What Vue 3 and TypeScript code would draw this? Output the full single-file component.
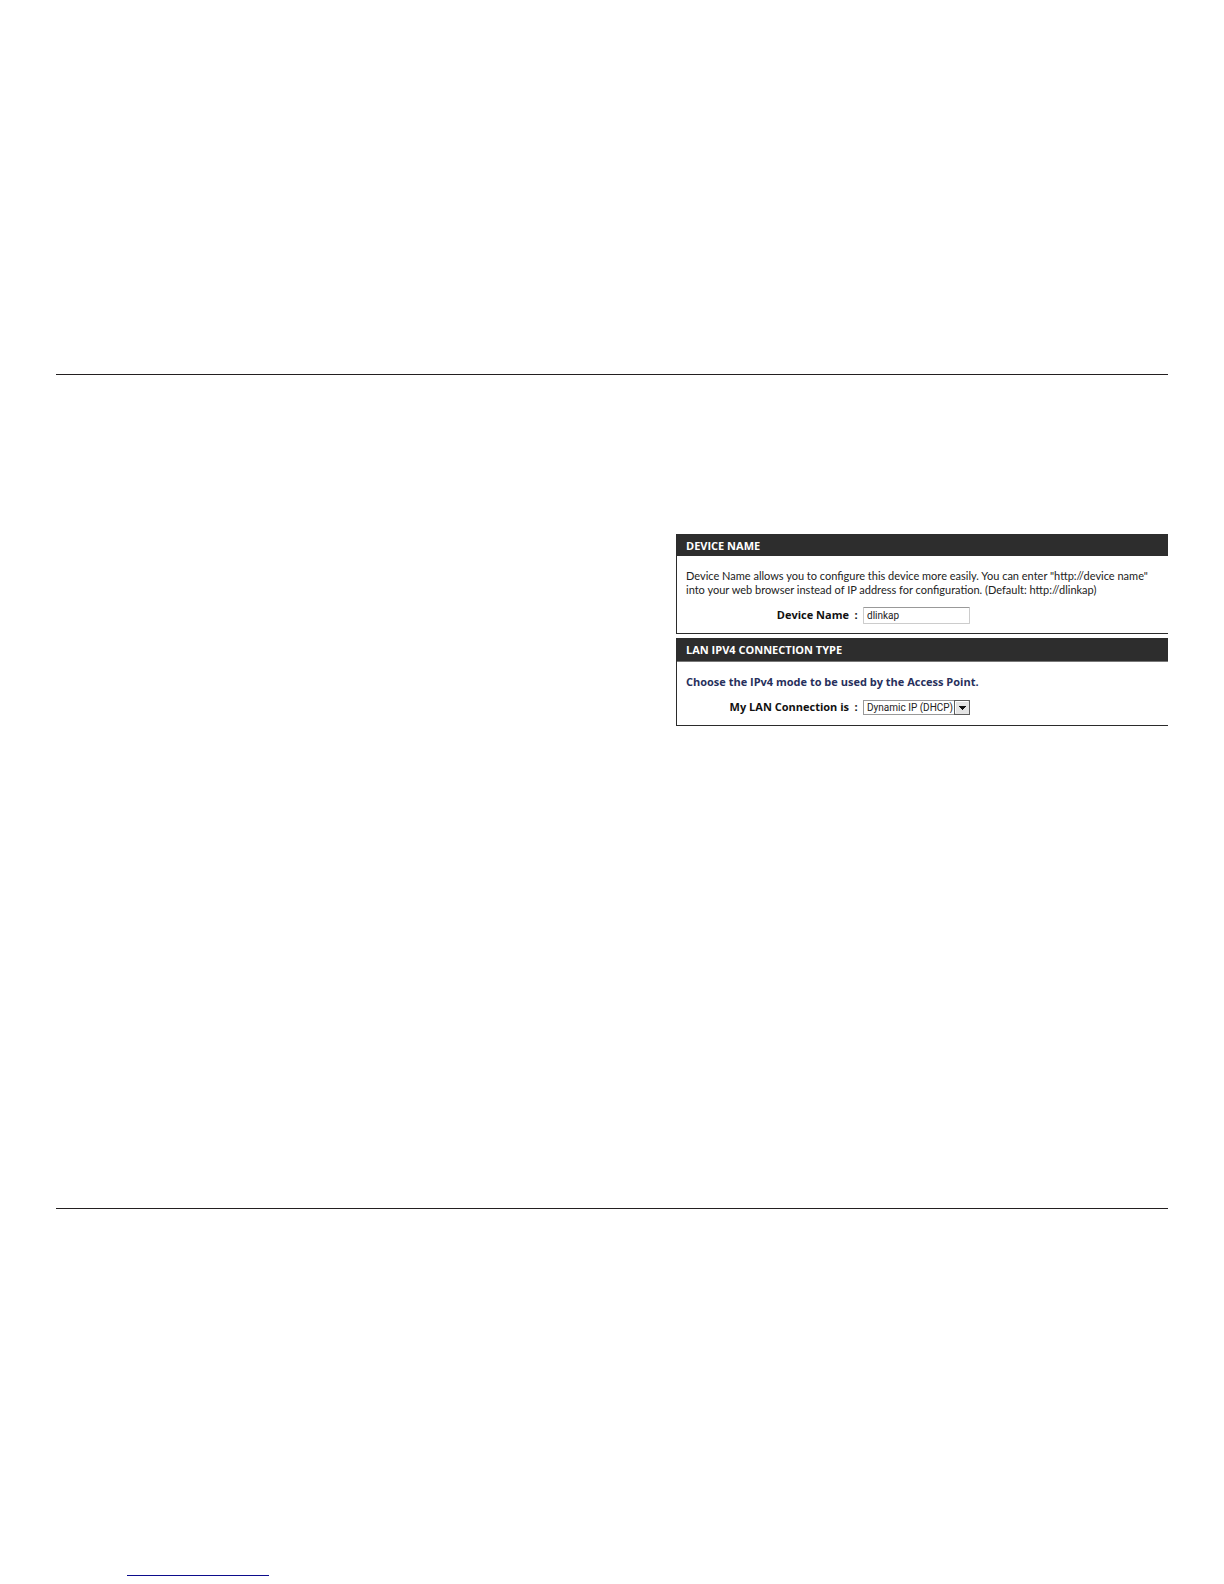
<script setup lang="ts">
import { ref } from 'vue'

const deviceName = ref<string>('dlinkap')
const connectionTypes: string[] = ['Dynamic IP (DHCP)']
const connection = ref<string>(connectionTypes[0])
</script>

<template>
  <div class="page">
    <main class="content">
      <div class="settings">
        <section class="panel">
          <h2 class="title">DEVICE NAME</h2>
          <div class="body">
            <p class="text">
              Device Name allows you to configure this device more easily. You can enter "http://device name"<br />
              into your web browser instead of IP address for configuration. (Default: http://dlinkap)
            </p>
            <div class="row">
              <label class="label" for="device-name">Device Name</label>
              <span class="colon">:</span>
              <input id="device-name" v-model="deviceName" class="field" type="text" />
            </div>
          </div>
        </section>
        <section class="panel">
          <h2 class="title ruled">LAN IPV4 CONNECTION TYPE</h2>
          <div class="body">
            <p class="text lead">Choose the IPv4 mode to be used by the Access Point.</p>
            <div class="row">
              <label class="label" for="lan-connection">My LAN Connection is</label>
              <span class="colon">:</span>
              <div class="picker">
                <select id="lan-connection" v-model="connection" class="field select">
                  <option v-for="item in connectionTypes" :key="item">{{ item }}</option>
                </select>
                <svg class="arrow" viewBox="0 0 16 15" aria-hidden="true">
                  <rect x="0.5" y="0.5" width="15" height="14" fill="#e4e4e4" stroke="#5c5c5c" />
                  <path d="M1.5 13V1.500H14" fill="none" stroke="#fff" />
                  <path d="M5 6H12V7H11V8H10V9H9V10H8V9H7V8H6V7H5Z" fill="#111" />
                </svg>
              </div>
            </div>
          </div>
        </section>
      </div>
    </main>
    <footer class="footer">
      <hr class="underline" />
    </footer>
  </div>
</template>

<style>
body {
  margin: 0;
  background: #fff;
}
</style>

<style scoped>
.page {
  box-sizing: border-box;
  min-height: 100vh;
  padding: 374px 56px 8px;
  display: flex;
  flex-direction: column;
  font-family: "Open Sans", "Noto Sans", sans-serif;
  font-size: 11px;
  line-height: 14px;
  color: #222;
}
.content {
  box-sizing: border-box;
  min-height: 835px;
  padding-top: 159px;
  border-top: 1px solid #231f20;
  border-bottom: 1px solid #231f20;
}
.settings {
  display: flex;
  flex-direction: column;
  gap: 4px;
  margin-left: 620px;
}
.panel {
  border: 1px solid #2b2b2b;
  border-width: 0 0 1px 1px;
}
.title {
  margin: 0;
  padding: 2px 9px 0;
  background: #2d2d2d;
  color: #fff;
  font-size: 11px;
  line-height: 20px;
}
.ruled {
  padding-bottom: 1px;
  border-bottom: 1px solid #777;
}
.body {
  padding: 13px 9px 9px;
}
.text {
  margin: 0 0 10px;
  font-family: Lato, sans-serif;
  white-space: nowrap;
}
.lead {
  color: #27305c;
  font-family: inherit;
  font-weight: bold;
}
.row {
  display: flex;
  align-items: center;
  min-height: 17px;
  color: #111;
}
.label,
.colon {
  padding-bottom: 2px;
  font-weight: bold;
}
.label {
  width: 163px;
  text-align: right;
}
.colon {
  width: 14px;
  text-align: center;
}
.field {
  box-sizing: border-box;
  width: 107px;
  height: 17px;
  margin: 0;
  padding: 0 3px;
  border: 1px solid #ccc;
  border-top-color: #999;
  border-radius: 1px;
  background: #fff;
  color: #222;
  font-family: Roboto, sans-serif;
  font-size: 10px;
}
.picker {
  position: relative;
  display: flex;
}
.select {
  height: 15px;
  appearance: none;
  border-color: #999;
  border-radius: 0;
}
.arrow {
  position: absolute;
  top: 0;
  right: 0;
  width: 16px;
  height: 15px;
  pointer-events: none;
}
.footer {
  margin-top: auto;
  padding-left: 71px;
}
.underline {
  width: 142px;
  margin: 0;
  border: 0;
  border-top: 1px solid #0c0c8c;
}
</style>
